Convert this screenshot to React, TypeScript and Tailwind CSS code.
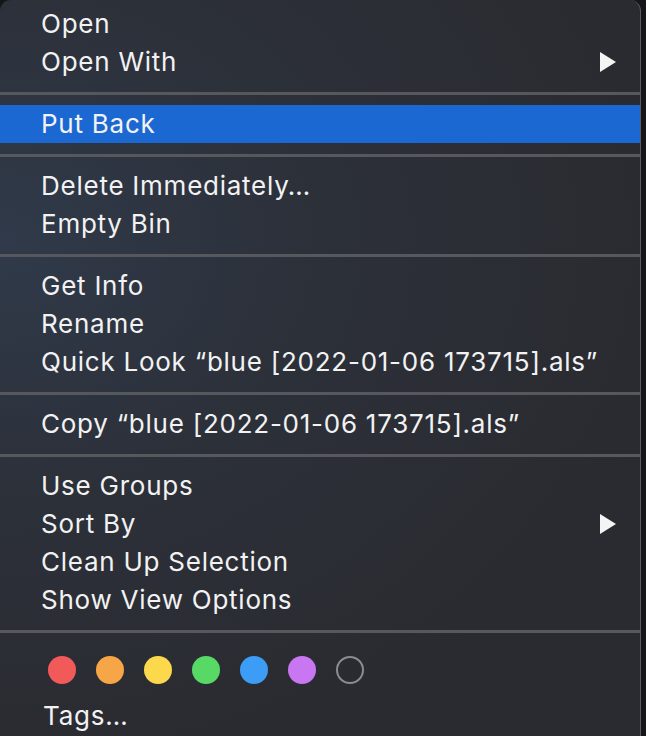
import React from 'react';

type Entry =
  | { kind: 'item'; label: string; submenu?: boolean; active?: boolean }
  | { kind: 'sep' };

const entries: Entry[] = [
  { kind: 'item', label: 'Open' },
  { kind: 'item', label: 'Open With', submenu: true },
  { kind: 'sep' },
  { kind: 'item', label: 'Put Back', active: true },
  { kind: 'sep' },
  { kind: 'item', label: 'Delete Immediately…' },
  { kind: 'item', label: 'Empty Bin' },
  { kind: 'sep' },
  { kind: 'item', label: 'Get Info' },
  { kind: 'item', label: 'Rename' },
  { kind: 'item', label: 'Quick Look “blue [2022-01-06 173715].als”' },
  { kind: 'sep' },
  { kind: 'item', label: 'Copy “blue [2022-01-06 173715].als”' },
  { kind: 'sep' },
  { kind: 'item', label: 'Use Groups' },
  { kind: 'item', label: 'Sort By', submenu: true },
  { kind: 'item', label: 'Clean Up Selection' },
  { kind: 'item', label: 'Show View Options' },
  { kind: 'sep' },
];

const tagColors = ['bg-[#f25a5a]', 'bg-[#f6a647]', 'bg-[#fbd84c]', 'bg-[#58d965]', 'bg-[#3d9cf6]', 'bg-[#c876f2]'];

const Arrow: React.FC = () => (
  <svg width="18" height="20" viewBox="0 0 18 20" className="shrink-0">
    <polygon points="1,0 17,10 1,20" fill="#f4f4f4" />
  </svg>
);

const App: React.FC = () => {
  return (
    <div className="h-[736px] w-[646px] overflow-hidden bg-[#161618] font-['Inter','Liberation_Sans',sans-serif]">
      <div className="h-[760px] w-[641px] rounded-[11px] border-r border-[#5b5c60] bg-[radial-gradient(ellipse_at_0%_32%,#303a4a_0%,#2c3039_35%,#2a2b30_75%)] pt-[5px] text-[#f2f2f3]">
        {entries.map((entry, i) =>
          entry.kind === 'sep' ? (
            <div key={i} className="flex h-[24px] items-center">
              <div className="h-[3px] w-full bg-[#57585d]" />
            </div>
          ) : (
            <div
              key={i}
              className={`flex h-[38px] items-center justify-between pl-[41px] pr-[23px] text-[26px] leading-none tracking-[0.75px] ${
                entry.active ? 'bg-[#1b68d2]' : ''
              }`}
            >
              <span>{entry.label}</span>
              {entry.submenu && <Arrow />}
            </div>
          )
        )}
        <div className="flex h-[54px] items-center gap-[20px] pl-[48px]">
          {tagColors.map((c) => (
            <div key={c} className={`h-[28px] w-[28px] rounded-full ${c}`} />
          ))}
          <div className="h-[28px] w-[28px] rounded-full border-2 border-[#8b8c8f]" />
        </div>
        <div className="flex h-[38px] items-center pl-[43px] text-[26px] leading-none tracking-[0.75px]">Tags…</div>
      </div>
    </div>
  );
};

export default App;
